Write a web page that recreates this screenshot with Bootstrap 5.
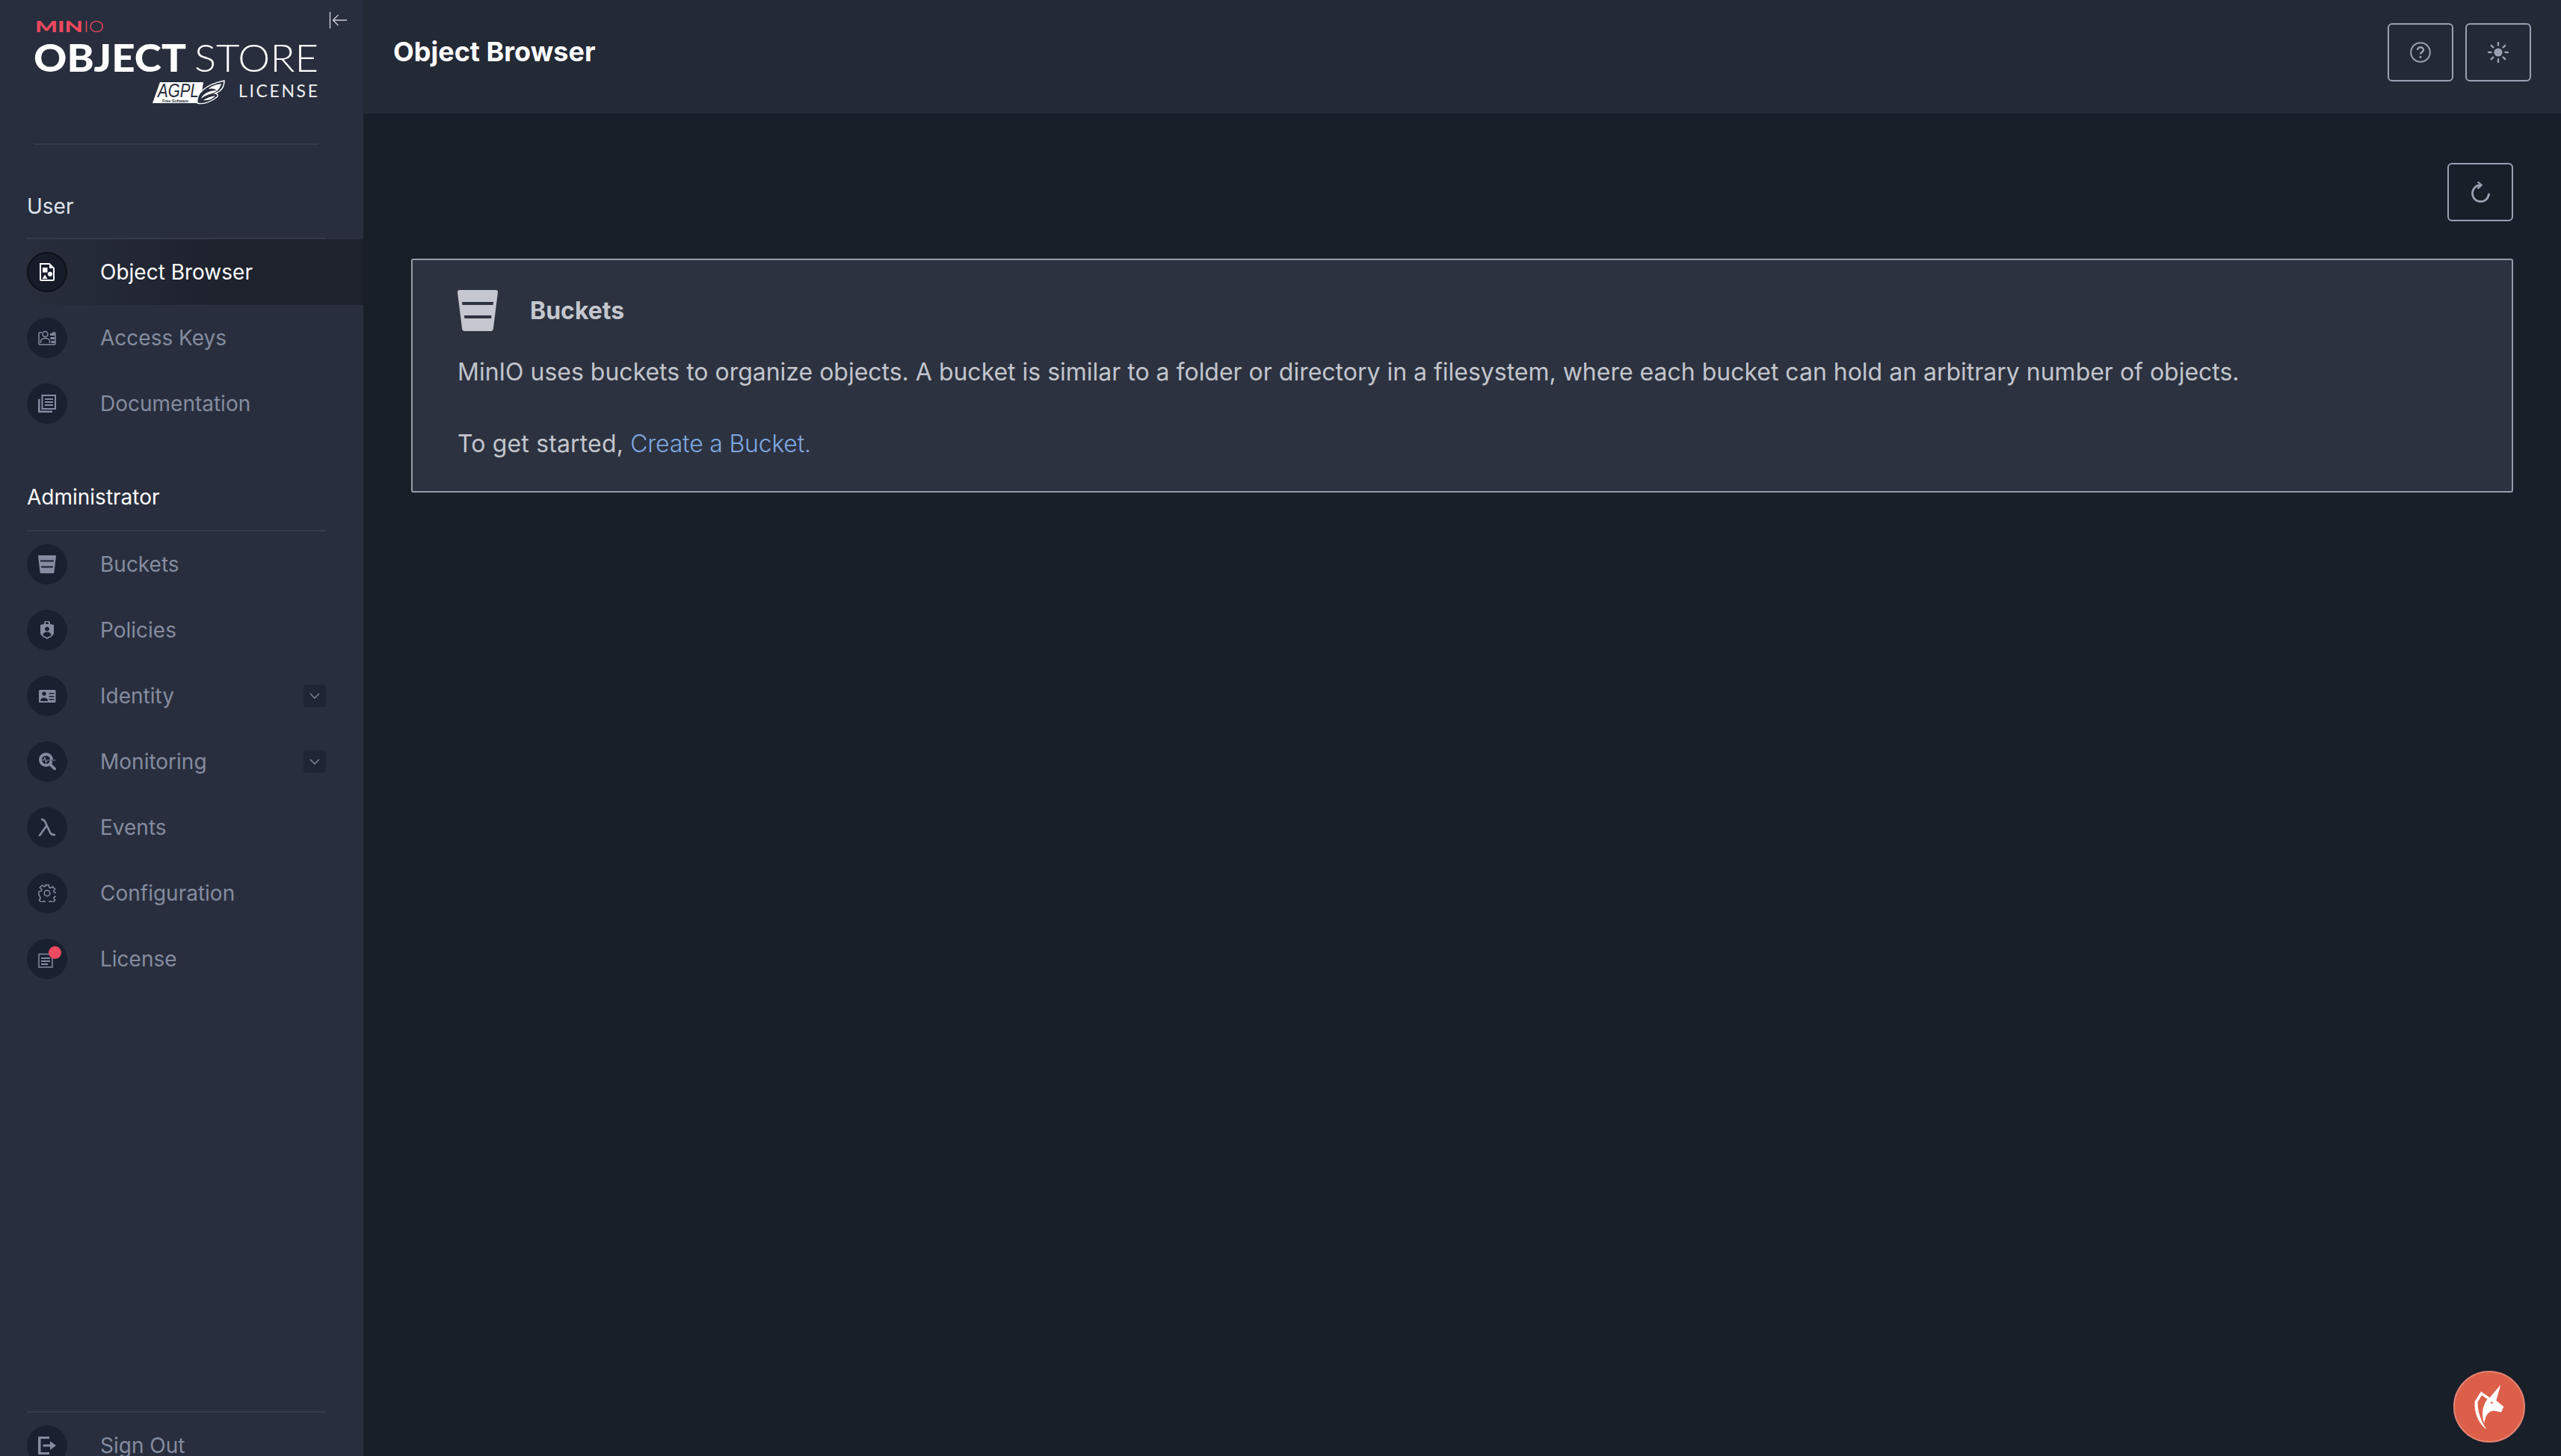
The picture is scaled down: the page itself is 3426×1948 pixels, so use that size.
<!DOCTYPE html>
<html lang="en">
<head>
<meta charset="utf-8">
<title>MinIO Object Store</title>
<link href="https://cdn.jsdelivr.net/npm/bootstrap@5.3.0/dist/css/bootstrap.min.css" rel="stylesheet">
<style>
html,body{height:100%;overflow:hidden;background:#191f29;font-family:Inter,"Liberation Sans",sans-serif;}
.shell{height:1948px;}
.side{width:486px;flex:0 0 486px;background:#282e3d;overflow:hidden;height:1948px;}
.side-in{min-height:1978px;}
.brand{height:192px;margin:0;position:relative;}
.brand svg.logo{display:block;}
.collapse-ic{position:absolute;left:440px;top:15px;width:24px;height:24px;}
.rule{height:2px;background:#353b4c;margin:0 50px 0 36px;}
.rule-top{margin:0 60px 0 46px;top:192px;}
.sec-label{font-size:28px;line-height:40px;padding-left:36px;margin-bottom:22px;font-weight:400;}
.sec-user{margin-top:64px;color:#dfe4ec;}
.sec-admin{margin-top:61px;margin-bottom:24px;color:#fff;}
.nav-row{height:88px;padding-left:36px;padding-right:50px;color:#858c9f;font-size:28px;text-decoration:none;}
.nav-row.on{color:#fff;background:linear-gradient(90deg,rgba(29,33,44,0) 5%,#1e222d 60%);}
.orb{width:54px;height:54px;border-radius:50%;background:#192030;margin-right:44px;flex:0 0 54px;position:relative;}
.nav-row.on .orb{background:#161c2a;border:2px solid #0e1118;}
.orb svg{width:24px;height:24px;display:block;}
.alert-dot{position:absolute;left:29px;top:10px;width:17px;height:17px;border-radius:50%;background:#f04a60;}
.chev{width:30px;height:30px;border-radius:4px;background:#1f2534;}
.chev svg{width:14px;height:10px;display:block;}
.foot{margin-top:auto;}
.top{height:152px;background:#232935;padding:0 40px 12px 40px;}
.top-title{font-size:36px;font-weight:700;color:#fff;margin:0;}
.sq-btn{width:88px;height:78px;padding:0;border:2px solid #99a1b2;border-radius:6px;background:transparent;color:#99a1b2;}
.sq-btn svg{width:28px;height:28px;display:block;}
.body-wrap{padding:66px 64px 0;}
.info{margin-top:50px;background:#2c323f;border:2px solid #959caa;border-radius:3px;padding:40px 60px;color:#c2c5cd;}
.info-head{margin-bottom:31px;height:55px;}
.info-ic{width:54px;height:55px;display:block;margin-right:43px;}
.info-title{font-size:32px;font-weight:700;color:#c4c7cf;}
.info-text{font-size:32px;line-height:48px;font-weight:400;margin:0 0 -1px;letter-spacing:-.01px;}
.info-lead{letter-spacing:.15px;}
.info-text a{color:#7ea8e3;text-decoration:none;font-weight:300;letter-spacing:-.2px;}
.fab{position:absolute;left:3282px;top:1834px;width:96px;height:96px;border-radius:50%;background:#dc5f4a;border:2px solid #e58472;}
.fab svg{display:block;}
</style>
</head>
<body>
<div class="shell d-flex position-relative">
  <aside class="side">
    <div class="side-in d-flex flex-column">
      <div class="brand">
        <svg class="logo" width="486" height="150" viewBox="0 0 486 150" xmlns="http://www.w3.org/2000/svg">
          <text x="47" y="43" font-family="Lato,sans-serif" font-weight="900" font-size="21" fill="#f0485e" textLength="64" lengthAdjust="spacingAndGlyphs">MIN</text>
          <text x="112" y="43" font-family="Lato,sans-serif" font-weight="300" font-size="21" fill="#f0485e" textLength="27" lengthAdjust="spacingAndGlyphs">IO</text>
          <text x="45" y="96" font-family="Lato,sans-serif" font-weight="900" font-size="52" fill="#fff" textLength="204" lengthAdjust="spacingAndGlyphs">OBJECT</text>
          <text x="260" y="96" font-family="Lato,sans-serif" font-weight="300" font-size="52" fill="#fff" textLength="166" lengthAdjust="spacingAndGlyphs">STORE</text>
          <polygon points="204,138 214,110 272,110 268,138" fill="#fff"/>
          <text x="211" y="130" font-family="'Liberation Sans',sans-serif" font-style="italic" font-size="25" fill="#282e3d" textLength="55" lengthAdjust="spacingAndGlyphs">AGPL</text>
          <text x="217" y="137" font-family="'Liberation Sans',sans-serif" font-weight="700" font-size="6" fill="#282e3d" textLength="35" lengthAdjust="spacingAndGlyphs">Free Software</text>
          <path d="M264 138C262 125 275 113 300 108C300 116 296 122 288 125C292 126 292 128 290 130C282 136 272 140 264 138Z" fill="#282e3d" stroke="#fff" stroke-width="1.400"/>
          <path d="M269 132C272 125 280 121 290 121C286 118 283 118 279 119C283 115 289 113 296 112C294 119 290 123 284 125C279 126 274 128 269 132ZM272 134C277 131 282 129 288 128C284 133 278 135 272 134Z" fill="#fff"/>
          <text x="319" y="130" font-family="Lato,sans-serif" font-weight="400" font-size="23" fill="#eef0f3" textLength="106" lengthAdjust="spacing">LICENSE</text>
        </svg>
        <svg class="collapse-ic" viewBox="0 0 24 24" fill="none" stroke="#c9ced8" stroke-width="1.400" xmlns="http://www.w3.org/2000/svg"><path d="M1.500 1v22M24 12H5.500M12.500 5l-7 7 7 7"/></svg>
        <div class="rule rule-top position-absolute start-0 end-0"></div>
      </div>

      <div class="sec-label sec-user">User</div>
      <div class="rule"></div>
      <a class="nav-row on d-flex align-items-center" href="#">
        <span class="orb d-flex align-items-center justify-content-center">
          <svg viewBox="0 0 24 24" xmlns="http://www.w3.org/2000/svg"><path fill="none" stroke="#fff" stroke-width="2" d="M3 1h12l6 6v15a1 1 0 0 1-1 1H4a1 1 0 0 1-1-1z"/><path fill="#fff" d="M6 6h6.500v6.500H6zM15 1l6 6h-6zM16 11.500a3.200 3.200 0 1 1-.01 0zM9 15.500l3.500 5.500h-7z"/></svg>
        </span>Object Browser</a>
      <a class="nav-row d-flex align-items-center" href="#">
        <span class="orb d-flex align-items-center justify-content-center">
          <svg viewBox="0 0 24 24" xmlns="http://www.w3.org/2000/svg"><g fill="none" stroke="#858c9f" stroke-width="1.500"><path d="M5 5H2a1 1 0 0 0-1 1v14a1 1 0 0 0 1 1h20a1 1 0 0 0 1-1V6a1 1 0 0 0-1-1h-3"/><circle cx="9.500" cy="7" r="3.500"/><path d="M3.500 19v-2c0-3 3-4.500 6-4.500s6 1.500 6 4.500v2"/></g><path fill="#858c9f" d="M16 6h6v3h-6zM16.500 11h5.500v3h-5.500zM17.500 16h4.500v3h-4.500z"/></svg>
        </span>Access Keys</a>
      <a class="nav-row d-flex align-items-center" href="#">
        <span class="orb d-flex align-items-center justify-content-center">
          <svg viewBox="0 0 24 24" xmlns="http://www.w3.org/2000/svg"><path fill="#858c9f" d="M0 6h2.500v15.500H19V24H0z"/><path fill="none" stroke="#858c9f" stroke-width="2" d="M5.500 1h17.500v18H5.500z"/><path fill="#858c9f" d="M9 5h11v2H9zM9 9h11v2H9zM9 13h11v2H9z"/></svg>
        </span>Documentation</a>

      <div class="sec-label sec-admin">Administrator</div>
      <div class="rule"></div>
      <a class="nav-row d-flex align-items-center" href="#">
        <span class="orb d-flex align-items-center justify-content-center">
          <svg viewBox="0 0 24 24" xmlns="http://www.w3.org/2000/svg"><path fill="#858c9f" d="M0 1a1 1 0 0 1 1-1h22a1 1 0 0 1 1 1l-2.500 21.500a1.500 1.500 0 0 1-1.500 1.500H4a1.500 1.500 0 0 1-1.500-1.500z"/><path fill="#192030" d="M3 6.500h18l-.2 2H3.200zM4 14.500h16l-.2 2H4.200z"/></svg>
        </span>Buckets</a>
      <a class="nav-row d-flex align-items-center" href="#">
        <span class="orb d-flex align-items-center justify-content-center">
          <svg viewBox="0 0 24 24" xmlns="http://www.w3.org/2000/svg"><path fill="#858c9f" d="M3 5l5-1V3a4 4 0 0 1 8 0v1l5 1v11c0 3-5 6-9 8-4-2-9-5-9-8z"/><path fill="#192030" d="M10 4V3a2 2 0 0 1 4 0v1zM12 7.500a3 3 0 1 1-.01 0zM6.500 19c0-3 2.500-4.500 5.500-4.500s5.500 1.500 5.500 4.500c-2 1.300-3.500 2-5.500 3-2-1-3.500-1.700-5.500-3z"/></svg>
        </span>Policies</a>
      <a class="nav-row d-flex align-items-center" href="#">
        <span class="orb d-flex align-items-center justify-content-center">
          <svg viewBox="0 0 24 24" xmlns="http://www.w3.org/2000/svg"><rect x="1" y="4" width="22.500" height="17" rx="1.500" fill="#858c9f"/><path fill="#192030" d="M8 6.500a2.700 2.700 0 1 1-.01 0zM3 19c0-3 2-4.500 5-4.500s5 1.500 5 4.500zM14.500 8h7v1.500h-7zM14.500 12h7v1.500h-7zM14.500 16h7v1.500h-7z"/></svg>
        </span>Identity<span class="chev ms-auto d-flex align-items-center justify-content-center"><svg viewBox="0 0 14 10" fill="none" stroke="#858c9f" stroke-width="1.400" xmlns="http://www.w3.org/2000/svg"><path d="M1 2l6 6 6-6"/></svg></span></a>
      <a class="nav-row d-flex align-items-center" href="#">
        <span class="orb d-flex align-items-center justify-content-center">
          <svg viewBox="0 0 24 24" xmlns="http://www.w3.org/2000/svg"><circle cx="10.500" cy="9.500" r="7.500" fill="none" stroke="#858c9f" stroke-width="4"/><path fill="none" stroke="#858c9f" stroke-width="3.800" stroke-linecap="round" d="M16 15.500l6 6"/><path fill="none" stroke="#192030" stroke-width="3" d="M18 10.500h3"/><path fill="none" stroke="#858c9f" stroke-width="1.100" d="M5 10h2.500l1.500-3.500 1.500 7 1.500-3.500h11.500"/></svg>
        </span>Monitoring<span class="chev ms-auto d-flex align-items-center justify-content-center"><svg viewBox="0 0 14 10" fill="none" stroke="#858c9f" stroke-width="1.400" xmlns="http://www.w3.org/2000/svg"><path d="M1 2l6 6 6-6"/></svg></span></a>
      <a class="nav-row d-flex align-items-center" href="#">
        <span class="orb d-flex align-items-center justify-content-center">
          <svg viewBox="0 0 24 24" xmlns="http://www.w3.org/2000/svg"><path fill="none" stroke="#858c9f" stroke-width="2.600" d="M4 1.300c4 0 5 2 6 4.500l6 13c1 2 2.500 3.200 7 3.200M11.500 9.500L1.500 23.500"/></svg>
        </span>Events</a>
      <a class="nav-row d-flex align-items-center" href="#">
        <span class="orb d-flex align-items-center justify-content-center">
          <svg viewBox="0 0 24 24" xmlns="http://www.w3.org/2000/svg" fill="none" stroke="#858c9f" stroke-width="1.500"><circle cx="12" cy="12" r="3.800"/><path d="M9.800 1h4.400l.6 3.200 2 .9 2.700-1.800 3.100 3.100-1.800 2.700.9 2 3.200.6v4.400l-3.200.6-.9 2 1.800 2.700-3.100 3.100-2.700-1.800-2 .9-.6 3.200H9.800l-.6-3.200-2-.9-2.700 1.800-3.100-3.100 1.800-2.700-.9-2L1 14.200V9.800l3.200-.6.900-2L2.300 4.500l3.100-3.100 2.700 1.800 2-.9z"/></svg>
        </span>Configuration</a>
      <a class="nav-row d-flex align-items-center" href="#">
        <span class="orb d-flex align-items-center justify-content-center">
          <svg viewBox="0 0 24 24" xmlns="http://www.w3.org/2000/svg"><path fill="none" stroke="#858c9f" stroke-width="1.500" d="M1 5.500h13l5 0v17.500H1z"/><path fill="#858c9f" d="M4 10h12v2H4zM4 14h12v2H4zM4 18h9v2H4z"/></svg>
          <span class="alert-dot"></span>
        </span>License</a>

      <div class="foot">
        <div class="rule"></div>
        <a class="nav-row d-flex align-items-center" href="#">
          <span class="orb d-flex align-items-center justify-content-center">
            <svg viewBox="0 0 24 24" xmlns="http://www.w3.org/2000/svg"><path fill="#858c9f" d="M0 0h15v3H3.500v18H15v3H0z"/><path fill="#858c9f" d="M6.500 10.500H16V6l8 6-8 6v-4.500H6.500z"/></svg>
          </span>Sign Out</a>
      </div>
    </div>
  </aside>

  <div class="flex-grow-1 d-flex flex-column">
    <header class="top d-flex align-items-center">
      <h1 class="top-title flex-grow-1">Object Browser</h1>
      <div class="d-flex gap-3">
        <button type="button" class="btn sq-btn d-flex align-items-center justify-content-center" aria-label="Help">
          <svg viewBox="0 0 28 28" xmlns="http://www.w3.org/2000/svg" fill="none" stroke="currentColor" stroke-width="2"><circle cx="14" cy="14" r="12.800"/><path stroke-width="2.400" d="M10 11c0-2.500 2-3.800 4-3.800s4 1.300 4 3.500c0 3-4 3-4 5.800"/><circle cx="14" cy="20.300" r="1.500" fill="currentColor" stroke="none"/></svg>
        </button>
        <button type="button" class="btn sq-btn d-flex align-items-center justify-content-center" aria-label="Theme">
          <svg viewBox="0 0 28 28" xmlns="http://www.w3.org/2000/svg" fill="currentColor" stroke="currentColor" stroke-width="2.400" stroke-linecap="round"><circle cx="14" cy="14" r="5.600" stroke="none"/><path d="M14 1v3.500M14 23.500V27M1 14h3.500M23.500 14H27M4.800 4.800l2.500 2.500M20.700 20.700l2.500 2.500M4.800 23.200l2.500-2.500M20.700 7.300l2.500-2.500"/></svg>
        </button>
      </div>
    </header>
    <main class="body-wrap flex-grow-1">
      <div class="d-flex justify-content-end">
        <button type="button" class="btn sq-btn d-flex align-items-center justify-content-center" aria-label="Refresh">
          <svg viewBox="0 0 28 28" xmlns="http://www.w3.org/2000/svg" fill="none" stroke="currentColor" stroke-width="2.800"><path d="M14 4.700a11 11 0 1 0 11.500 11"/><path d="M10.500 0l5 4.700-5 4.700" stroke-width="2.400"/></svg>
        </button>
      </div>
      <section class="info">
        <div class="info-head d-flex align-items-center">
          <svg class="info-ic" viewBox="0 0 54 55" xmlns="http://www.w3.org/2000/svg"><path fill="#c4c7cf" d="M0 3a3 3 0 0 1 3-3h48a3 3 0 0 1 3 3l-6 48a4 4 0 0 1-4 4H10a4 4 0 0 1-4-4z"/><path fill="#2c323f" d="M6 16h42l-.4 4H6.500zM9 34h36.500l-.4 4H9.500z"/></svg>
          <span class="info-title">Buckets</span>
        </div>
        <p class="info-text">MinIO uses buckets to organize objects. A bucket is similar to a folder or directory in a filesystem, where each bucket can hold an arbitrary number of objects.<br><br><span class="info-lead">To get started, </span><a href="#">Create a Bucket.</a></p>
      </section>
    </main>
  </div>

  <button type="button" class="fab btn p-0 d-flex align-items-center justify-content-center" aria-label="License assistant">
    <svg width="92" height="92" viewBox="44 35.700 92 92" xmlns="http://www.w3.org/2000/svg"><g transform="scale(.3333)" fill="#fff"><path d="M237 184L272 208L262 214L240 199L224 226C222 262 238 305 260 337C225 312 208 265 212 224Z"/><path d="M316 157L298 220L328 245L318 268L290 262C268 262 254 280 250 312C240 285 238 250 262 214L272 208Z"/><circle cx="280" cy="229" r="4" fill="#dc5f4a"/></g></svg>
  </button>
</div>
</body>
</html>
